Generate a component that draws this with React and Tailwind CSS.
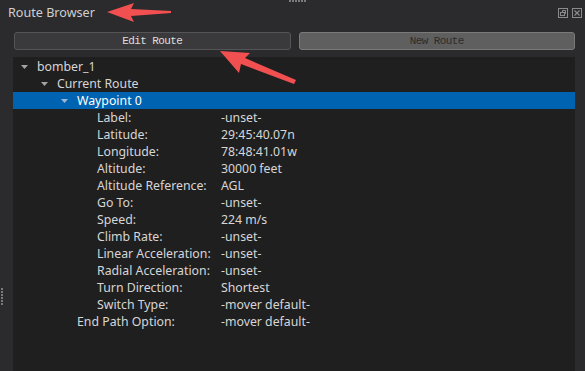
import { Fragment } from "react";

const props = [
  ["Label:", "-unset-"],
  ["Latitude:", "29:45:40.07n"],
  ["Longitude:", "78:48:41.01w"],
  ["Altitude:", "30000 feet"],
  ["Altitude Reference:", "AGL"],
  ["Go To:", "-unset-"],
  ["Speed:", "224 m/s"],
  ["Climb Rate:", "-unset-"],
  ["Linear Acceleration:", "-unset-"],
  ["Radial Acceleration:", "-unset-"],
  ["Turn Direction:", "Shortest"],
  ["Switch Type:", "-mover default-"],
];

function Caret({ light }) {
  return (
    <svg width="7" height="4" viewBox="0 0 7 4" className="shrink-0">
      <path d="M0 0 H7 L3.5 4 Z" fill={light ? "#9fb7d6" : "#a3a3a3"} />
    </svg>
  );
}

function Row({ indent, caret, label, value, selected, labelWidth }) {
  return (
    <div
      className={
        "flex h-[17px] items-center whitespace-nowrap " +
        (selected ? "bg-[#0063b1] text-white" : "text-[#d6d6d6]")
      }
      style={{ paddingLeft: indent }}
    >
      <div className="flex w-[16px] items-center">{caret && <Caret light={selected} />}</div>
      {value === undefined ? (
        <span className="pt-[2px]">{label}</span>
      ) : (
        <>
          <span className="shrink-0 pt-[2px]" style={{ width: labelWidth }}>{label}</span>
          <span className="pt-[2px]">{value}</span>
        </>
      )}
    </div>
  );
}

export default function App() {
  return (
    <div className="relative flex h-[371px] w-[585px] flex-col overflow-hidden bg-[#2b2b2d] font-['Noto_Sans','Liberation_Sans',sans-serif] text-[12.3px]">
      {/* title bar */}
      <div className="flex h-[26px] items-center justify-between pl-[8px] pr-[3px]">
        <span className="text-[12.6px] text-[#cfcfcf]">Route Browser</span>
        <div className="flex items-center gap-[4px]">
          <svg width="10" height="10" viewBox="0 0 10 10">
            <rect x="0.5" y="0.5" width="9" height="9" fill="none" stroke="#8a8a8a" />
            <rect x="2.5" y="4.5" width="4" height="3" fill="none" stroke="#8a8a8a" />
            <path d="M4.5 4.5 V2.5 H7.5 V5.5 H6.5" fill="none" stroke="#8a8a8a" />
          </svg>
          <svg width="10" height="10" viewBox="0 0 10 10">
            <rect x="0.5" y="0.5" width="9" height="9" fill="none" stroke="#8a8a8a" />
            <path d="M2.5 2.5 L7.5 7.5 M7.5 2.5 L2.5 7.5" stroke="#8a8a8a" strokeWidth="1.2" />
          </svg>
        </div>
      </div>

      {/* buttons */}
      <div className="mt-[6px] flex gap-[8px] pl-[14px] pr-[10px]">
        <button className="flex h-[18px] flex-1 items-center justify-center rounded-[3px] border border-[#555557] bg-[#3a3a3c] font-['Liberation_Mono',monospace] text-[11px] tracking-[-0.6px] text-[#dedede]">
          Edit Route
        </button>
        <button className="flex h-[18px] flex-1 items-center justify-center rounded-[3px] border border-[#7a7a7a] bg-[#5f5f5f] font-['Liberation_Mono',monospace] text-[11px] tracking-[-0.6px] text-[#2c2c2c]">
          New Route
        </button>
      </div>

      {/* tree */}
      <div className="mt-[7px] ml-[13px] mr-[10px] flex-1 bg-[#1f1f20] pt-[1px]">
        <Row indent={8} caret label="bomber_1" />
        <Row indent={28} caret label="Current Route" />
        <Row indent={48} caret label="Waypoint 0" selected />
        {props.map(([l, v]) => (
          <Fragment key={l}>
            <Row indent={68} label={l} value={v} labelWidth={124} />
          </Fragment>
        ))}
        <Row indent={48} label="End Path Option:" value="-mover default-" labelWidth={144} />
      </div>

      {/* grippers */}
      <div className="absolute left-[289px] top-0 flex gap-[1px]">
        {[0, 1, 2, 3, 4, 5].map((i) => (
          <div key={i} className="h-[2px] w-[2px] bg-[#7a7a7a]" />
        ))}
      </div>
      <div className="absolute left-[1px] top-[288px] flex flex-col gap-[1px]">
        {[0, 1, 2, 3, 4, 5].map((i) => (
          <div key={i} className="h-[2px] w-[2px] bg-[#7a7a7a]" />
        ))}
      </div>

      {/* annotation arrows */}
      <svg className="pointer-events-none absolute left-0 top-0" width="585" height="371">
        <polygon points="107,12 134,3 131,9 171,11 171,13 131,16 134,22" fill="#f25050" />
        <polygon points="220,51 250,53 245,58 296,80 294,84 241,64 239,73" fill="#f25050" />
      </svg>
    </div>
  );
}
